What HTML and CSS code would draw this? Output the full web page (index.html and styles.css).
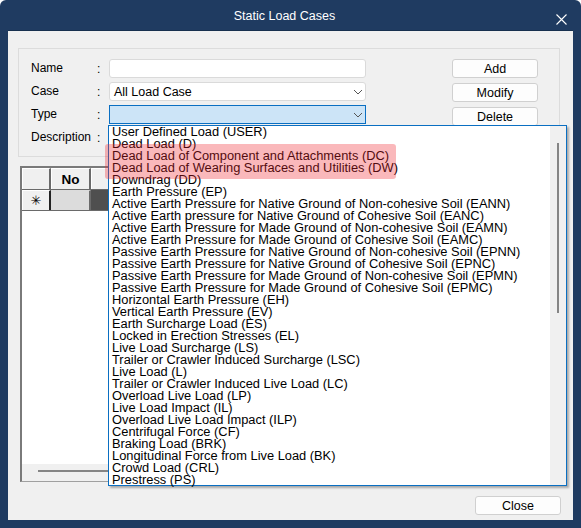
FILE: index.html
```html
<!DOCTYPE html>
<html>
<head>
<meta charset="utf-8">
<link rel="stylesheet" href="styles.css">
</head>
<body>
<div class="win">
  <div class="titlebar">
    <span class="title">Static Load Cases</span>
    <svg class="xbtn" width="11" height="11" viewBox="0 0 11 11"><path d="M0.5 0.5 L10.5 10.5 M10.5 0.5 L0.5 10.5" stroke="#fff" stroke-width="1.1" fill="none"/></svg>
  </div>
  <div class="client">
    <div class="group">
      <div class="fields">
        <div class="row"><span class="lbl">Name</span><span class="colon">:</span><div class="input"></div></div>
        <div class="row"><span class="lbl">Case</span><span class="colon">:</span><div class="input select"><span>All Load Case</span><svg class="chev" width="10" height="6" viewBox="0 0 10 6"><path d="M1 1 L5 5 L9 1" stroke="#555" stroke-width="1" fill="none"/></svg></div></div>
        <div class="row"><span class="lbl">Type</span><span class="colon">:</span><div class="input select active"><span></span><svg class="chev" width="10" height="6" viewBox="0 0 10 6"><path d="M1 1 L5 5 L9 1" stroke="#555" stroke-width="1" fill="none"/></svg></div></div>
        <div class="row"><span class="lbl">Description</span><span class="colon">:</span><div class="input"></div></div>
      </div>
      <div class="buttons">
        <button class="btn">Add</button>
        <button class="btn">Modify</button>
        <button class="btn">Delete</button>
      </div>
    </div>
    <div class="grid">
      <div class="grow head">
        <div class="cell c1"></div>
        <div class="cell c2"><b>No</b></div>
        <div class="cell c3"></div>
      </div>
      <div class="grow">
        <div class="cell c1 star">✳</div>
        <div class="cell c2 lg"></div>
        <div class="cell c3 dk"></div>
      </div>
      <div class="gbody"></div>
      <div class="hscroll"><div class="hthumb"></div></div>
    </div>
    <div class="footer"><button class="btn">Close</button></div>
  </div>

  <div class="dropdown">
    <ul class="items">
      <li>User Defined Load (USER)</li>
      <li>Dead Load (D)</li>
      <li>Dead Load of Component and Attachments (DC)</li>
      <li>Dead Load of Wearing Surfaces and Utilities (DW)</li>
      <li>Downdrag (DD)</li>
      <li>Earth Pressure (EP)</li>
      <li>Active Earth Pressure for Native Ground of Non-cohesive Soil (EANN)</li>
      <li>Active Earth pressure for Native Ground of Cohesive Soil (EANC)</li>
      <li>Active Earth Pressure for Made Ground of Non-cohesive Soil (EAMN)</li>
      <li>Active Earth Pressure for Made Ground of Cohesive Soil (EAMC)</li>
      <li>Passive Earth Pressure for Native Ground of Non-cohesive Soil (EPNN)</li>
      <li>Passive Earth Pressure for Native Ground of Cohesive Soil (EPNC)</li>
      <li>Passive Earth Pressure for Made Ground of Non-cohesive Soil (EPMN)</li>
      <li>Passive Earth Pressure for Made Ground of Cohesive Soil (EPMC)</li>
      <li>Horizontal Earth Pressure (EH)</li>
      <li>Vertical Earth Pressure (EV)</li>
      <li>Earth Surcharge Load (ES)</li>
      <li>Locked in Erection Stresses (EL)</li>
      <li>Live Load Surcharge (LS)</li>
      <li>Trailer or Crawler Induced Surcharge (LSC)</li>
      <li>Live Load (L)</li>
      <li>Trailer or Crawler Induced Live Load (LC)</li>
      <li>Overload Live Load (LP)</li>
      <li>Live Load Impact (IL)</li>
      <li>Overload Live Load Impact (ILP)</li>
      <li>Centrifugal Force (CF)</li>
      <li>Braking Load (BRK)</li>
      <li>Longitudinal Force from Live Load (BK)</li>
      <li>Crowd Load (CRL)</li>
      <li>Prestress (PS)</li>
    </ul>
    <div class="vscroll"><div class="vthumb"></div></div>
  </div>
  <div class="highlight"></div>
</div>
</body>
</html>
```

FILE: styles.css
```css
html, body {
  margin: 0;
  padding: 0;
  background: #ffffff;
}
body {
  font-family: "Liberation Sans", Arial, sans-serif;
  font-size: 12px;
  color: #000;
}
.win {
  position: relative;
  width: 581px;
  height: 528px;
  background: #1f3b61;
  border-radius: 6px 6px 0 0;
  box-sizing: border-box;
  padding: 0 8px 8px 8px;
  display: flex;
  flex-direction: column;
}
.titlebar {
  height: 30px;
  border-bottom: 1px solid #17304f;
  position: relative;
  display: flex;
  align-items: center;
  justify-content: center;
}
.title {
  color: #ffffff;
  font-family: "Liberation Sans", Arial, sans-serif;
  font-size: 12.5px;
  margin-right: 12px;
  margin-top: 2px;
}
.xbtn {
  position: absolute;
  right: 6px;
  top: 14px;
}
.client {
  flex: 1;
  background: #f0f0f0;
  padding: 17px 0 0 10px;
  display: flex;
  flex-direction: column;
}
.group {
  width: 542px;
  height: 109px;
  box-sizing: border-box;
  border: 1px solid #dcdcdc;
  padding: 10px 0 0 12px;
  display: flex;
}
.fields {
  display: flex;
  flex-direction: column;
  gap: 4px;
}
.row {
  display: flex;
  align-items: center;
  height: 19px;
}
.lbl {
  width: 66px;
  line-height: 19px;
}
.colon {
  width: 12px;
}
.input {
  width: 257px;
  height: 19px;
  box-sizing: border-box;
  background: #fff;
  border: 1px solid #dadada;
  border-radius: 3px;
}
.select {
  display: flex;
  align-items: center;
  justify-content: space-between;
  padding: 0 2px 0 4px;
}
.select span {
  font-size: 12.5px;
}
.select.active {
  background: #cce4f7;
  border-color: #0a6fc2;
  border-radius: 0;
}
.buttons {
  margin-left: 86px;
  display: flex;
  flex-direction: column;
  gap: 5px;
}
.btn {
  width: 86px;
  height: 19px;
  box-sizing: border-box;
  background: #fdfdfd;
  border: 1px solid #d0d0d0;
  border-radius: 3px;
  font-family: "Liberation Sans", Arial, sans-serif;
  font-size: 12.5px;
  padding: 0;
  color: #000;
  line-height: 16px;
}
.grid {
  margin: 9px 0 0 2px;
  width: 540px;
  height: 316px;
  box-sizing: border-box;
  border-left: 2px solid #7a7a7a;
  border-top: 2px solid #7a7a7a;
  border-bottom: 1px solid #a0a0a0;
  display: flex;
  flex-direction: column;
  background: #fff;
}
.grow {
  display: flex;
  height: 20px;
  border-bottom: 1px solid #6a6a6a;
}
.grow.head {
  height: 21px;
}
.cell {
  box-sizing: border-box;
  border-right: 2px solid #6a6a6a;
  border-top: 1px solid #fff;
  border-left: 1px solid #fff;
  background: #f0f0f0;
  display: flex;
  align-items: center;
  justify-content: center;
}
.c1 { width: 29px; }
.c2 { width: 40px; }
.c3 { flex: 1; }
.head b {
  font-size: 13.5px;
}
.star {
  font-size: 13px;
  font-family: "DejaVu Sans", sans-serif;
  border-right: 2px solid #222;
}
.lg { background: #dcdcdc; border-top-color: #dcdcdc; border-left-color: #dcdcdc; }
.dk { background: #4f4f4f; border-color: #4f4f4f; }
.gbody {
  flex: 1;
  background: #fff;
}
.hscroll {
  height: 17px;
  background: #f0f0f0;
  position: relative;
}
.hthumb {
  position: absolute;
  left: 16px;
  right: 20px;
  top: 6px;
  height: 2px;
  background: #858585;
}
.footer {
  display: flex;
  justify-content: flex-end;
  padding: 14px 12px 0 0;
}
.dropdown {
  position: absolute;
  left: 108px;
  top: 125px;
  width: 459px;
  height: 361px;
  box-sizing: border-box;
  border: 1px solid #0a6fc2;
  background: #fff;
  box-shadow: 2px 2px 2px rgba(0, 0, 0, 0.3);
  display: flex;
}
.items {
  list-style: none;
  margin: 0;
  padding: 0 0 0 3px;
  flex: 1;
  font-family: "Liberation Sans", Arial, sans-serif;
  font-size: 12.85px;
  line-height: 12px;
}
.items li {
  height: 12px;
  white-space: nowrap;
}
.vscroll {
  width: 16px;
  background: #f0f0f0;
  position: relative;
}
.vthumb {
  position: absolute;
  left: 7px;
  width: 2px;
  top: 17px;
  height: 170px;
  background: #858585;
}
.highlight {
  position: absolute;
  left: 105px;
  top: 144px;
  width: 291px;
  height: 35px;
  border-radius: 3px;
  background: rgba(240, 40, 50, 0.33);
}
```
